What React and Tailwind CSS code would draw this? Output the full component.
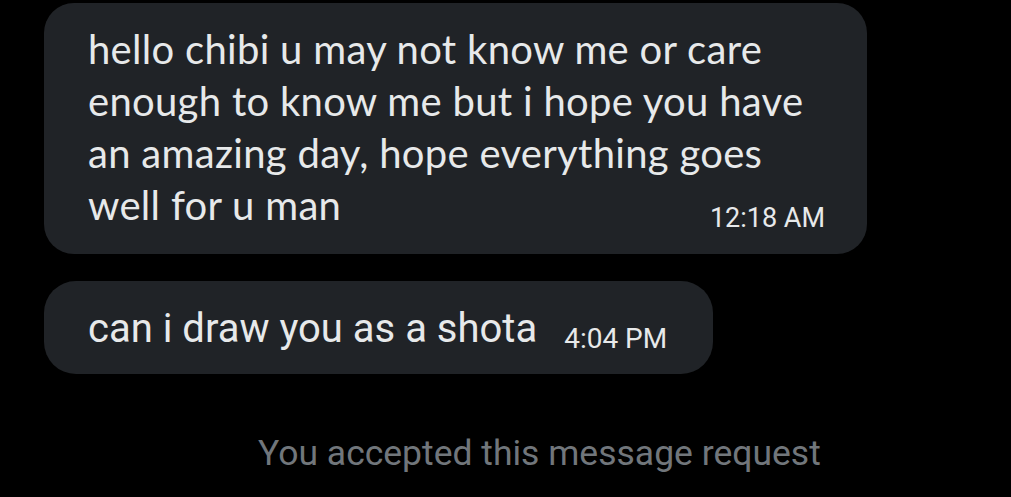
const App = () => {
  return (
    <div className="w-[1011px] h-[497px] bg-black overflow-hidden flex flex-col">
      <div className="pl-[44px] pt-[3px] flex flex-col items-start gap-[27px]">
        {/* first message */}
        <div className="w-[823px] h-[251px] bg-[#202327] rounded-[30px] pl-[44px] pr-[40px] pt-[20px] relative">
          <p className="text-[#e7e9ea] text-[40px] leading-[52px] tracking-[0.3px] font-['Lato',sans-serif]">
            hello chibi u may not know me or care
            <br />
            enough to know me but i hope you have
            <br />
            an amazing day, hope everything goes
            <br />
            well for u man
          </p>
          <span className="absolute right-[42px] bottom-[22px] text-[#e7e9ea] text-[27px] leading-none font-['Roboto',sans-serif]">
            12:18 AM
          </span>
        </div>

        {/* second message */}
        <div className="w-[669px] h-[93px] bg-[#202327] rounded-[32px] pl-[44px] pt-[27px] flex items-baseline gap-[27px] font-['Roboto',sans-serif]">
          <span className="text-[#e7e9ea] text-[40px] leading-[42px]">can i draw you as a shota</span>
          <span className="text-[#e7e9ea] text-[28px] leading-none translate-y-[6px]">4:04 PM</span>
        </div>
      </div>

      <div className="mt-[62px] pl-[258px]">
        <span className="text-[#71767b] text-[35.5px] leading-none font-['Roboto',sans-serif]">You accepted this message request</span>
      </div>
    </div>
  );
};

export default App;
